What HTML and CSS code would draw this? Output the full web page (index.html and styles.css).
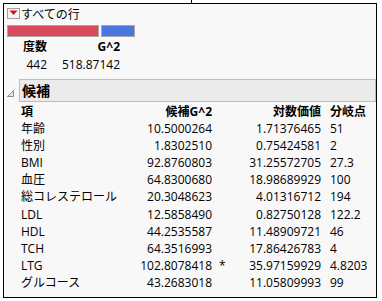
FILE: index.html
```html
<!DOCTYPE html>
<html lang="ja">
<head>
<meta charset="utf-8">
<title>すべての行</title>
<link rel="stylesheet" href="styles.css">
</head>
<body>
<div class="frame">
  <span class="tick"></span>
  <div class="title-row">
    <svg class="menu-icon" width="13" height="11" viewBox="0 0 13 11"><rect x="0.5" y="0.5" width="12" height="10" fill="#f4f4f4" stroke="#a0a0a0"/><polygon points="2.5,2.5 10.5,2.5 6.5,7" fill="#d0101a"/></svg>
    <span class="title">すべての行</span>
  </div>
  <div class="bars">
    <div class="bar red"></div>
    <div class="bar blue"></div>
  </div>
  <div class="stats">
    <div class="h">度数</div><div class="h">G^2</div>
    <div>442</div><div>518.87142</div>
  </div>
  <div class="section-head">
    <svg class="disc" width="7" height="7" viewBox="0 0 7 7"><polygon points="6.5,0.5 6.5,6.5 0.5,6.5" fill="#e6e6e6" stroke="#8a8a8a"/></svg>
    <div class="head-box">候補</div>
  </div>
  <div class="table">
    <div class="h name">項</div><div class="h num">候補G^2</div><div class="star"></div><div class="h num">対数価値</div><div class="h split">分岐点</div>
    <div class="name">年齢</div><div class="num">10.5000264</div><div class="star"></div><div class="num">1.71376465</div><div class="split">51</div>
    <div class="name">性別</div><div class="num">1.8302510</div><div class="star"></div><div class="num">0.75424581</div><div class="split">2</div>
    <div class="name">BMI</div><div class="num">92.8760803</div><div class="star"></div><div class="num">31.25572705</div><div class="split">27.3</div>
    <div class="name">血圧</div><div class="num">64.8300680</div><div class="star"></div><div class="num">18.98689929</div><div class="split">100</div>
    <div class="name">総コレステロール</div><div class="num">20.3048623</div><div class="star"></div><div class="num">4.01316712</div><div class="split">194</div>
    <div class="name">LDL</div><div class="num">12.5858490</div><div class="star"></div><div class="num">0.82750128</div><div class="split">122.2</div>
    <div class="name">HDL</div><div class="num">44.2535587</div><div class="star"></div><div class="num">11.48909721</div><div class="split">46</div>
    <div class="name">TCH</div><div class="num">64.3516993</div><div class="star"></div><div class="num">17.86426783</div><div class="split">4</div>
    <div class="name">LTG</div><div class="num">102.8078418</div><div class="star">*</div><div class="num">35.97159929</div><div class="split">4.8203</div>
    <div class="name">グルコース</div><div class="num">43.2683018</div><div class="star"></div><div class="num">11.05809993</div><div class="split">99</div>
  </div>
</div>
</body>
</html>
```

FILE: styles.css
```css
html, body {
  margin: 0;
  padding: 0;
  background: #ffffff;
}
body {
  font-family: "Open Sans", "Noto Sans CJK JP", sans-serif;
  font-size: 12px;
  color: #000;
}
.frame {
  position: relative;
  margin: 3px 0 0 3px;
  width: 372px;
  height: 293px;
  border: 1px solid #000;
  background: #f8f8f8;
}
.tick {
  position: absolute;
  left: 187px;
  top: -4px;
  width: 1px;
  height: 3px;
  background: #000;
}
.title-row {
  display: flex;
  align-items: center;
  height: 20px;
  padding-left: 3px;
}
.menu-icon {
  display: block;
  margin-top: -1px;
}
.title {
  margin-left: 1px;
  font-family: "Noto Sans CJK JP", sans-serif;
  line-height: 20px;
}
.bars {
  display: flex;
  gap: 2px;
  margin-top: 1px;
  padding-left: 3px;
}
.bar {
  box-sizing: border-box;
  height: 12px;
  border: 1px solid #a6a6a6;
}
.bar.red { width: 92px; background: #d84a5b; }
.bar.blue { width: 34px; background: #4a77dd; }
.stats {
  display: grid;
  grid-template-columns: 28px 73px;
  grid-auto-rows: 18px;
  line-height: 18px;
  margin-top: 1px;
  padding-left: 15px;
  text-align: right;
}
.h { font-weight: bold; }
.section-head {
  display: flex;
  align-items: flex-end;
  margin-top: 5px;
}
.disc {
  display: block;
  width: 7px;
  height: 7px;
  margin: 0 5px 5px 3px;
}
.head-box {
  flex: 1;
  box-sizing: border-box;
  height: 23px;
  border: 1px solid #bdbdbd;
  background: #ebebeb;
  padding-left: 2px;
  font-size: 14px;
  font-weight: bold;
  line-height: 21px;
}
.table {
  display: grid;
  grid-template-columns: 117px 74px 17px 92px 1fr;
  grid-auto-rows: 17.1px;
  line-height: 17.1px;
  margin-top: 1px;
  padding-left: 17px;
  white-space: nowrap;
}
.num { text-align: right; }
.star { padding-left: 7px; }
.split { padding-left: 9px; }
```
